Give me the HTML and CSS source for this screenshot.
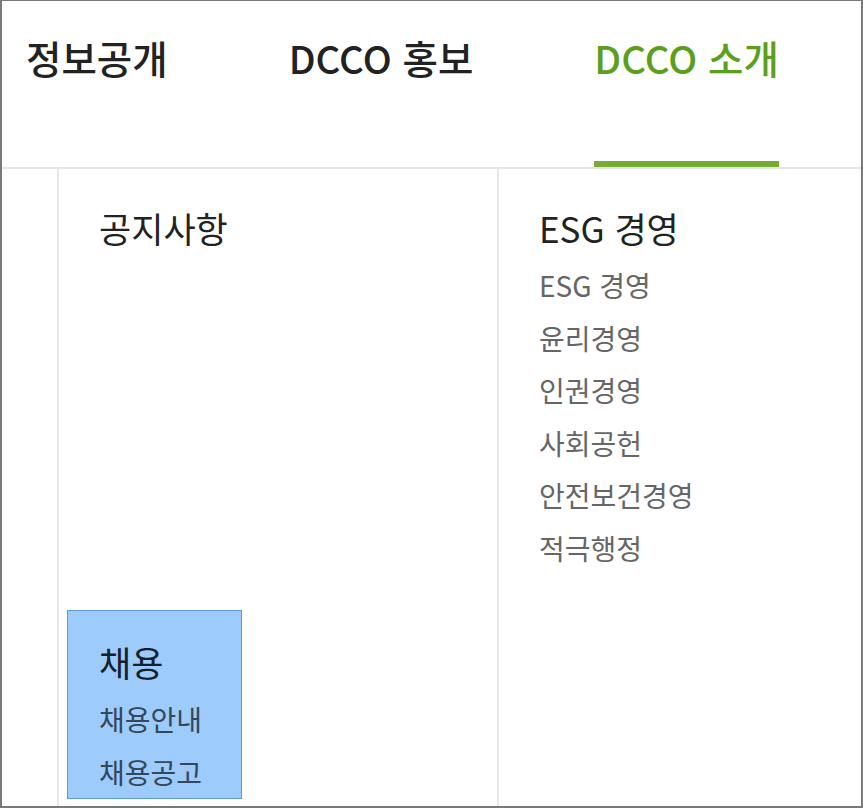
FILE: index.html
```html
<!DOCTYPE html>
<html lang="ko">
<head>
  <meta charset="UTF-8">
  <meta name="viewport" content="width=device-width, initial-scale=1.0">
  <title>DCCO - 메뉴</title>
  <link rel="stylesheet" href="styles.css">
</head>
<body>
  <div class="frame">
    <div class="gnb">
      <a class="gnb-item" href="#">정보공개</a>
      <a class="gnb-item" href="#">DCCO 홍보</a>
      <a class="gnb-item active" href="#">DCCO 소개</a>
    </div>

    <div class="sub-wrap">
      <div class="sub-space"></div>

      <div class="sub-col">
        <div class="menu-group first">
          <h3>공지사항</h3>
        </div>
        <div class="menu-group picked">
          <h3>채용</h3>
          <ul>
            <li><a href="#">채용안내</a></li>
            <li><a href="#">채용공고</a></li>
          </ul>
        </div>
      </div>

      <div class="sub-col">
        <div class="menu-group">
          <h3>ESG 경영</h3>
          <ul>
            <li><a href="#">ESG 경영</a></li>
            <li><a href="#">윤리경영</a></li>
            <li><a href="#">인권경영</a></li>
            <li><a href="#">사회공헌</a></li>
            <li><a href="#">안전보건경영</a></li>
            <li><a href="#">적극행정</a></li>
          </ul>
        </div>
      </div>
    </div>
  </div>
</body>
</html>
```

FILE: styles.css
```css
/* 기본 */
* {
  box-sizing: border-box;
  margin: 0;
  padding: 0;
}

body {
  font-family: "Noto Sans CJK KR", "Noto Sans", sans-serif;
  color: #222;
  background: #fff;
}

a {
  color: inherit;
  text-decoration: none;
}

ul {
  list-style: none;
}

.frame {
  width: 863px;
  height: 808px;
  border-style: solid;
  border-color: #7a7a7a;
  border-width: 1px 2px 2px 2px;
  display: flex;
  flex-direction: column;
  overflow: hidden;
}

/* 상단 메뉴 */
.gnb {
  height: 168px;
  flex: none;
  display: flex;
  gap: 121px;
  padding-left: 24px;
  border-bottom: 2px solid #e6e6e6;
}

.gnb-item {
  height: 166px;
  padding-top: 28px;
  font-size: 38.5px;
  line-height: 56px;
  font-weight: 500;
  color: #222;
}

.gnb-item.active {
  color: #5b9f1c;
  border-bottom: 6px solid #77ad32;
}

/* 하위 메뉴 */
.sub-wrap {
  flex: 1;
  display: flex;
}

.sub-space {
  width: 55px;
}

.sub-col {
  width: 440px;
  border-left: 2px solid #e8e8e8;
  padding: 34px 0 0 8px;
}

.sub-col:last-child {
  flex: 1;
}

.menu-group {
  padding-left: 32px;
  width: 175px;
  white-space: nowrap;
}

.menu-group.first {
  min-height: 407px;
}

.menu-group h3 {
  font-size: 35px;
  line-height: 50px;
  font-weight: 400;
  color: #222;
}

.menu-group ul {
  margin-top: 6px;
}

.menu-group li {
  font-size: 28px;
  line-height: 52.5px;
  color: #666;
}

/* 선택된 영역 */
.menu-group.picked {
  background: #9ccbfc;
  border: 1px solid #5d9ad8;
  padding-top: 26px;
  padding-left: 31px;
  height: 189px;
}

.menu-group.picked h3 {
  color: #14202c;
}

.menu-group.picked ul {
  margin-top: 6px;
}

.menu-group.picked li {
  color: #34475b;
}
```
